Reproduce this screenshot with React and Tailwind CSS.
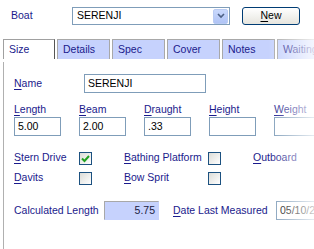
const Field = ({ value = "", w = "w-[47px]", className = "" }) => (
  <div className={`${w} h-[19px] shrink-0 border border-[#7f9db9] bg-white flex items-center px-[3px] text-black whitespace-nowrap overflow-hidden ${className}`}>
    {value}
  </div>
);

const Check = ({ checked }) => (
  <div className="w-[13px] h-[13px] shrink-0 border border-[#1c5180] bg-gradient-to-br from-[#dcdcd7] to-white flex items-center justify-center">
    {checked && (
      <svg width="9" height="9" viewBox="0 0 9 9">
        <path d="M1 4.5 L3.5 7 L8 2" stroke="#21a121" strokeWidth="2" fill="none" />
      </svg>
    )}
  </div>
);

const Label = ({ k, rest, className = "" }) => (
  <span className={`whitespace-nowrap shrink-0 ${className}`}>
    <span className="underline underline-offset-[2px]">{k}</span>
    {rest}
  </span>
);

const tabs = ["Details", "Spec", "Cover", "Notes", "Waiting"];

export default function App() {
  return (
    <div className="relative w-[314px] h-[249px] overflow-hidden bg-white text-[10.5px] text-[#1a1a8c] font-['Liberation_Sans',Arial,sans-serif]">
      {/* top bar */}
      <div className="flex items-center pt-[7px] pl-[11px]">
        <span className="w-[61px]">Boat</span>
        <div className="w-[158px] h-[18px] border border-[#7f9db9] flex items-center justify-between pl-[4px] pr-[1px] text-black">
          SERENJI
          <div className="w-[15px] h-[15px] rounded-[2px] bg-gradient-to-b from-[#c9d8fc] to-[#b0c4f5] border border-[#b9cbf3] flex items-center justify-center">
            <svg width="8" height="6" viewBox="0 0 8 6">
              <path d="M1 1 L4 4 L7 1" stroke="#4d6185" strokeWidth="1.6" fill="none" />
            </svg>
          </div>
        </div>
        <div className="ml-[12px] w-[58px] h-[18px] rounded-[3px] border border-[#003c74] bg-gradient-to-b from-white to-[#e6e5de] flex items-center justify-center text-black">
          <Label k="N" rest="ew" />
        </div>
      </div>

      {/* tabs */}
      <div className="flex items-end mt-[14px] pl-[3px] gap-[2px]">
        <div className="w-[52px] h-[20px] shrink-0 border border-[#a0a0a0] border-r-[#555] border-b-0 bg-white flex items-center px-[5px]">
          Size
        </div>
        {tabs.map((t) => (
          <div key={t} className="w-[53px] h-[20px] shrink-0 border border-[#a8a8a8] border-b-0 bg-[#c6d2fd] flex items-center px-[5px]">
            {t}
          </div>
        ))}
      </div>

      {/* content */}
      <div className="ml-[3px] mt-[3px] border-l border-[#b0b0b0] h-[190px] pl-[10px]">
        <div className="flex items-center pt-[12px]">
          <Label k="N" rest="ame" className="w-[70px]" />
          <Field value="SERENJI" w="w-[122px]" className="h-[18px]" />
        </div>

        <div className="flex gap-[18px] mt-[10px]">
          {[
            ["L", "ength", "5.00"],
            ["B", "eam", "2.00"],
            ["D", "raught", ".33"],
            ["H", "eight", ""],
            ["W", "eight", ""],
          ].map(([k, r, v]) => (
            <div key={k + r} className="flex flex-col shrink-0">
              <Label k={k} rest={r} className="leading-[13px]" />
              <Field value={v} className="mt-[1px]" />
            </div>
          ))}
        </div>

        <div className="flex items-center mt-[15px] h-[14px]">
          <Label k="S" rest="tern Drive" className="w-[65px]" />
          <Check checked />
          <Label k="B" rest="athing Platform" className="ml-[32px] w-[84px]" />
          <Check />
          <Label k="O" rest="utboard" className="ml-[32px]" />
        </div>
        <div className="flex items-center mt-[6px] h-[14px]">
          <Label k="D" rest="avits" className="w-[65px]" />
          <Check />
          <Label k="B" rest="ow Sprit" className="ml-[32px] w-[84px]" />
          <Check />
        </div>

        <div className="flex items-center mt-[16px]">
          <span className="w-[90px] shrink-0 whitespace-nowrap">Calculated Length</span>
          <div className="w-[55px] h-[19px] shrink-0 bg-[#c6d2fd] border border-[#a8a8a8] border-r-[#c6d2fd] border-b-[#c6d2fd] flex items-center justify-end pr-[3px] text-[#202040]">
            5.75
          </div>
          <Label k="D" rest="ate Last Measured" className="ml-[14px] w-[103px]" />
          <Field value="05/10/2010" w="w-[60px]" className="text-[#666]" />
        </div>
      </div>

      {/* right-edge fade */}
      <div className="absolute top-[34px] right-0 w-[46px] h-[215px] bg-gradient-to-r from-white/0 to-white/80" />
    </div>
  );
}
